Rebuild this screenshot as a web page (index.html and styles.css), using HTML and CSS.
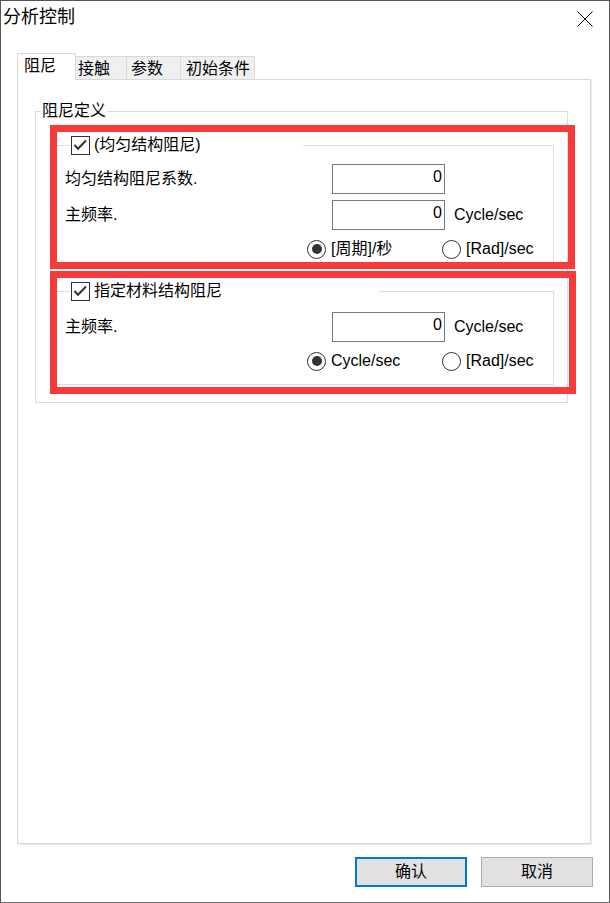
FILE: index.html
```html
<!DOCTYPE html>
<html lang="zh-CN">
<head>
<meta charset="utf-8">
<title>分析控制</title>
<link rel="stylesheet" href="styles.css">
</head>
<body>
<div class="window">
  <div class="titlebar">
    <div class="title">分析控制</div>
    <svg class="close" width="16" height="16" viewBox="0 0 16 16" aria-label="关闭">
      <path d="M0.5 0.5 L15.5 15.5 M15.5 0.5 L0.5 15.5" stroke="#000" stroke-width="1" fill="none"/>
    </svg>
  </div>
  <div class="tabs">
    <div class="tab tab-sel">阻尼</div>
    <div class="tab tab-2">接触</div>
    <div class="tab tab-3">参数</div>
    <div class="tab tab-4">初始条件</div>
  </div>
  <div class="panel">
    <div class="group group-outer">
      <div class="group-title title-outer">阻尼定义</div>

      <div class="group group-inner g1">
        <div class="group-title check-title ct1">
          <span class="checkbox"><svg width="17" height="17" viewBox="0 0 17 17"><path d="M2.5 8 L6 11.8 L14 3.5" stroke="#333" stroke-width="2" fill="none"/></svg></span>
          <span class="lbl">(均匀结构阻尼)</span>
        </div>
        <div class="row r1">
          <span class="lbl">均匀结构阻尼系数.</span>
          <input class="field" type="text" value="0" readonly>
          <span></span>
        </div>
        <div class="row r2">
          <span class="lbl">主频率.</span>
          <input class="field" type="text" value="0" readonly>
          <span class="lbl">Cycle/sec</span>
        </div>
        <div class="radio-row">
          <div class="radio-opt"><span class="radio on"></span><span class="lbl">[周期]/秒</span></div>
          <div class="radio-opt"><span class="radio"></span><span class="lbl">[Rad]/sec</span></div>
        </div>
      </div>

      <div class="group group-inner g2">
        <div class="group-title check-title ct2">
          <span class="checkbox"><svg width="17" height="17" viewBox="0 0 17 17"><path d="M2.5 8 L6 11.8 L14 3.5" stroke="#333" stroke-width="2" fill="none"/></svg></span>
          <span class="lbl">指定材料结构阻尼</span>
        </div>
        <div class="row r3">
          <span class="lbl">主频率.</span>
          <input class="field" type="text" value="0" readonly>
          <span class="lbl">Cycle/sec</span>
        </div>
        <div class="radio-row">
          <div class="radio-opt"><span class="radio on"></span><span class="lbl">Cycle/sec</span></div>
          <div class="radio-opt"><span class="radio"></span><span class="lbl">[Rad]/sec</span></div>
        </div>
      </div>
    </div>
  </div>
  <div class="footer">
    <button class="btn btn-primary" type="button">确认</button>
    <button class="btn" type="button">取消</button>
  </div>
  <div class="mark mark-1"></div>
  <div class="mark mark-2"></div>
</div>
</body>
</html>
```
FILE: styles.css
```css
body {
  margin: 0;
  font-family: "Liberation Sans", "Noto Sans CJK SC", sans-serif;
  font-size: 16px;
  color: #000;
  background: #fff;
}

.window {
  position: relative;
  box-sizing: border-box;
  width: 610px;
  height: 903px;
  border: 1px solid #555;
  border-bottom-color: #6e6e6e;
  background: #fff;
  overflow: hidden;
}

.titlebar {
  display: flex;
  justify-content: space-between;
  align-items: flex-start;
  height: 52px;
}

.title {
  font-size: 18px;
  line-height: 18px;
  margin: 7px 0 0 2px;
}

.close {
  display: block;
  margin: 10px 16px 0 0;
}

.tabs {
  display: flex;
  align-items: flex-end;
  height: 26px;
  margin-left: 16px;
}

.tab {
  box-sizing: border-box;
  height: 23px;
  border: 1px solid #d9d9d9;
  border-left: none;
  border-bottom: none;
  background: #f0f0f0;
  line-height: 16px;
  padding-top: 4px;
  white-space: nowrap;
}

.tab-sel {
  position: relative;
  z-index: 1;
  height: 27px;
  margin-bottom: -1px;
  border-left: 1px solid #d9d9d9;
  background: #fff;
  width: 59px;
  padding-left: 6px;
}

.tab-2 { width: 51px; padding-left: 2px; }
.tab-3 { width: 54px; padding-left: 4px; }
.tab-4 { width: 74px; padding-left: 5px; }

.panel {
  box-sizing: border-box;
  width: 574px;
  height: 765px;
  margin-left: 16px;
  border: 1px solid #d9d9d9;
  box-shadow: 1px 1px 0 #ececec;
  overflow: hidden;
}

.group {
  box-sizing: border-box;
  border: 1px solid #dcdcdc;
}

.group-outer {
  width: 533px;
  height: 292px;
  margin: 31px 0 0 17px;
}

.group-title {
  width: fit-content;
  background: #fff;
  line-height: 18px;
}

.title-outer {
  margin: -10px 0 0 5px;
  padding: 0 1px;
}

.group-inner {
  width: 499px;
  margin-left: 19px;
}

.g1 { height: 119px; margin-top: 25px; }
.g2 { height: 94px; margin-top: 27px; }

.check-title {
  box-sizing: border-box;
  display: flex;
  align-items: center;
  gap: 4px;
  height: 20px;
  margin: -11px 0 0 14px;
  padding-left: 1px;
}

.ct1 { width: 233px; }
.ct2 { width: 309px; }

.checkbox {
  box-sizing: border-box;
  display: flex;
  width: 19px;
  height: 19px;
  border: 1px solid #333;
  background: #fff;
}

.lbl {
  line-height: 18px;
  white-space: nowrap;
}

.row {
  display: grid;
  grid-template-columns: 258px 113px auto;
  column-gap: 9px;
  align-items: center;
  padding-left: 9px;
}

.r1 { margin-top: 9px; }
.r2 { margin-top: 6px; }
.r3 { margin-top: 11px; }

.field {
  box-sizing: border-box;
  width: 113px;
  height: 30px;
  margin: 0;
  padding: 0 2px 4px 0;
  border: 1px solid #7a7a7a;
  border-radius: 0;
  background: #fff;
  color: #000;
  font: inherit;
  font-size: 16px;
  text-align: right;
  outline: none;
}

.radio-row {
  display: flex;
  align-items: center;
  height: 20px;
  margin-top: 9px;
  padding-left: 251px;
}

.radio-opt {
  display: flex;
  flex-shrink: 0;
  align-items: center;
  gap: 5px;
}

.radio-opt:first-child {
  width: 135px;
}

.radio {
  box-sizing: border-box;
  display: flex;
  flex-shrink: 0;
  align-items: center;
  justify-content: center;
  width: 19px;
  height: 19px;
  border: 1px solid #333;
  border-radius: 50%;
  background: #fff;
}

.radio.on::after {
  content: "";
  width: 10px;
  height: 10px;
  border-radius: 50%;
  background: #333;
}

.footer {
  display: flex;
  justify-content: flex-end;
  gap: 14px;
  margin-top: 13px;
  padding-right: 16px;
}

.btn {
  box-sizing: border-box;
  width: 112px;
  height: 30px;
  padding: 0;
  border: 1px solid #adadad;
  background: #e1e1e1;
  color: #000;
  font: inherit;
  font-size: 16px;
  line-height: 18px;
}

.btn-primary {
  border: 2px solid #0078d7;
}

.mark {
  position: absolute;
  box-sizing: border-box;
  border: 7px solid #f83a3a;
  pointer-events: none;
}

.mark-1 { left: 49px; top: 124px; width: 525px; height: 144px; }
.mark-2 { left: 49px; top: 270px; width: 526px; height: 123px; }
```
